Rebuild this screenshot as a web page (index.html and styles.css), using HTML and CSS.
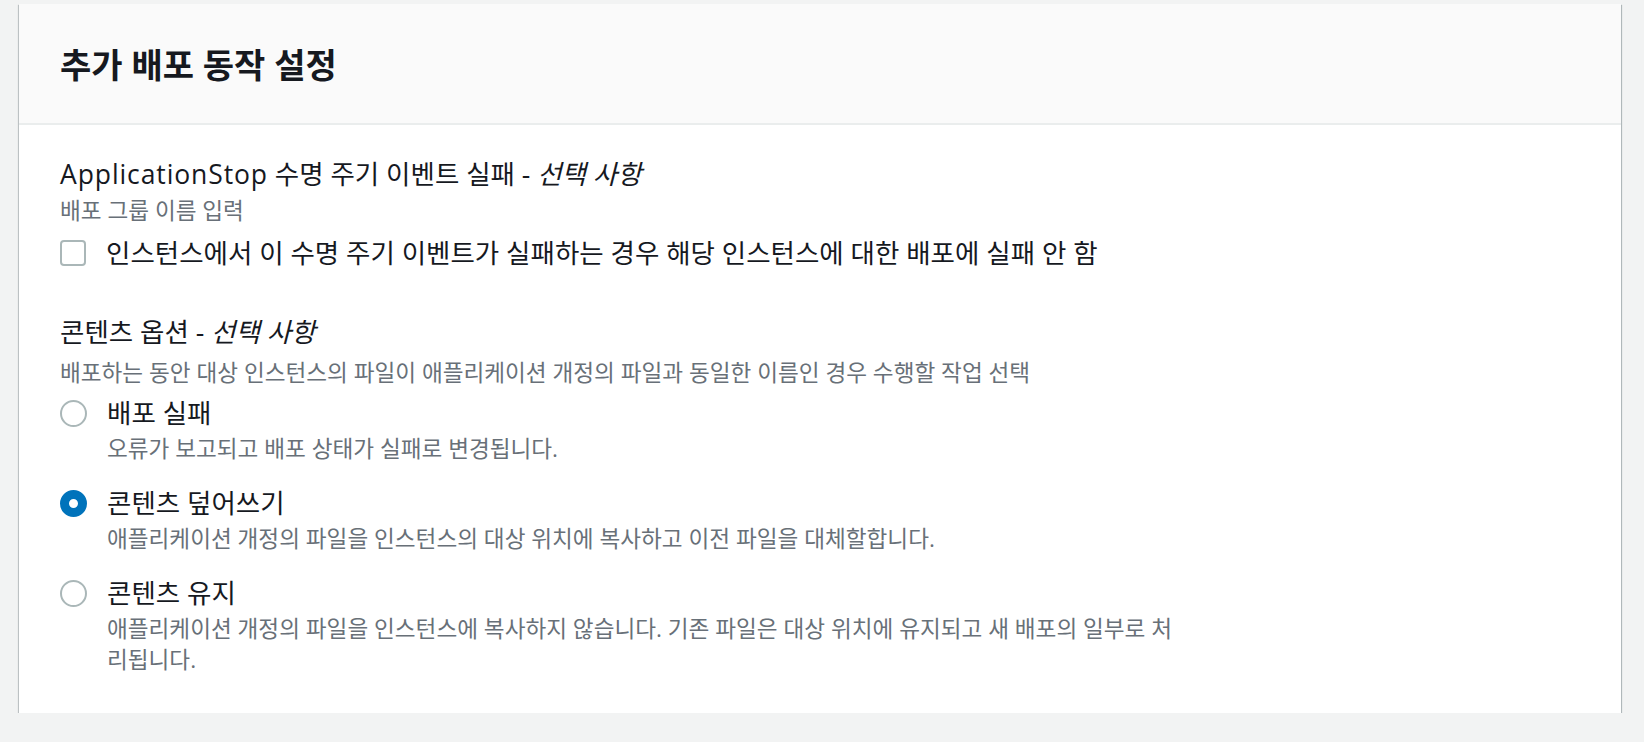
FILE: index.html
```html
<!DOCTYPE html>
<html lang="ko">
<head>
    <meta charset="UTF-8">
    <meta name="viewport" content="width=device-width, initial-scale=1.0">
    <title>추가 배포 동작 설정</title>
    <link rel="stylesheet" href="styles.css">
</head>
<body>
    <main class="page">
        <section class="card">
            <!-- Header -->
            <div class="card-header">
                <h2>추가 배포 동작 설정</h2>
            </div>

            <div class="card-body">
                <!-- ApplicationStop -->
                <div class="field">
                    <div class="field-label"><span class="latin">ApplicationStop</span> 수명 주기 이벤트 실패 - <i>선택 사항</i></div>
                    <div class="field-desc">배포 그룹 이름 입력</div>
                    <label class="option option-check">
                        <span class="checkbox"></span>
                        <span class="option-text">인스턴스에서 이 수명 주기 이벤트가 실패하는 경우 해당 인스턴스에 대한 배포에 실패 안 함</span>
                    </label>
                </div>

                <!-- Content options -->
                <div class="field field-content">
                    <div class="field-label">콘텐츠 옵션 - <i>선택 사항</i></div>
                    <div class="field-desc field-desc-wide">배포하는 동안 대상 인스턴스의 파일이 애플리케이션 개정의 파일과 동일한 이름인 경우 수행할 작업 선택</div>

                    <div class="radio-group">
                        <label class="option">
                            <span class="radio"></span>
                            <span class="option-text">
                                <span class="option-title">배포 실패</span>
                                <span class="option-desc">오류가 보고되고 배포 상태가 실패로 변경됩니다.</span>
                            </span>
                        </label>
                        <label class="option">
                            <span class="radio checked"></span>
                            <span class="option-text">
                                <span class="option-title">콘텐츠 덮어쓰기</span>
                                <span class="option-desc">애플리케이션 개정의 파일을 인스턴스의 대상 위치에 복사하고 이전 파일을 대체할합니다.</span>
                            </span>
                        </label>
                        <label class="option">
                            <span class="radio"></span>
                            <span class="option-text">
                                <span class="option-title">콘텐츠 유지</span>
                                <span class="option-desc">애플리케이션 개정의 파일을 인스턴스에 복사하지 않습니다. 기존 파일은 대상 위치에 유지되고 새 배포의 일부로 처리됩니다.</span>
                            </span>
                        </label>
                    </div>
                </div>
            </div>
        </section>
    </main>
</body>
</html>
```

FILE: styles.css
```css
body {
    background-color: #f2f3f3;
    font-family: "Open Sans", "Noto Sans CJK KR", sans-serif;
    color: #16191f;
    margin: 0;
    padding: 0;
}
.page {
    padding: 4px 23px 0 19px;
}
.card {
    background: #fff;
    box-shadow: 0 1px 1px 0 rgba(0, 28, 36, 0.5), 1px 1px 1px 0 rgba(0, 28, 36, 0.2), -1px 1px 1px 0 rgba(0, 28, 36, 0.15);
}
.card-header {
    background-color: #fafafa;
    border-bottom: 2px solid #eaeded;
    padding: 41px 41px 38px;
}
.card-header h2 {
    margin: 0;
    font-size: 34px;
    line-height: 40px;
    font-weight: 700;
}
.card-body {
    padding: 32px 41px 38px;
}
.field-label {
    font-size: 26.5px;
    line-height: 34px;
}
.field-label .latin {
    letter-spacing: 0.9px;
}
.field-desc {
    font-size: 22.6px;
    line-height: 31px;
    color: #687078;
    margin-top: 4px;
}
.field-desc-wide {
    margin-top: 8px;
}
.field-content {
    margin-top: 45px;
}
.option {
    display: flex;
    gap: 20px;
    align-items: flex-start;
}
.option-check {
    margin-top: 10px;
}
.option-text {
    display: flex;
    flex-direction: column;
    font-size: 26.5px;
    line-height: 34px;
}
.option-title {
    font-size: 26.5px;
    line-height: 34px;
}
.option-desc {
    font-size: 22.6px;
    line-height: 31px;
    color: #687078;
    margin-top: 3px;
    max-width: 1085px;
}
.checkbox {
    flex: none;
    width: 26px;
    height: 26px;
    box-sizing: border-box;
    border: 2px solid #aab7b8;
    border-radius: 4px;
    margin-top: 4px;
    background: #fff;
}
.radio-group {
    margin-top: 8px;
    display: flex;
    flex-direction: column;
    gap: 22px;
}
.radio {
    flex: none;
    width: 27px;
    height: 27px;
    box-sizing: border-box;
    border: 2px solid #aab7b8;
    border-radius: 50%;
    margin-top: 4px;
    background: #fff;
}
.radio.checked {
    border: 9px solid #0073bb;
}
```
